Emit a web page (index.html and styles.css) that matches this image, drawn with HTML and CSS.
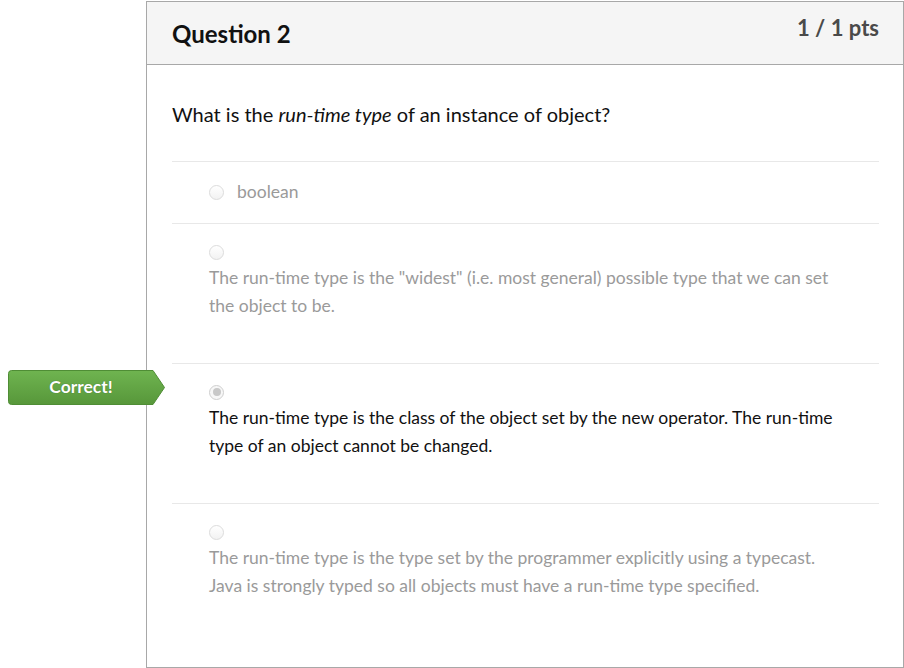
FILE: index.html
```html
<!DOCTYPE html>
<html>
<head>
<meta charset="utf-8">
<link rel="stylesheet" href="styles.css">
</head>
<body>
<div class="page">
  <div class="card">
    <div class="header">
      <h2 class="title">Question 2</h2>
      <div class="pts">1 / 1 pts</div>
    </div>
    <div class="body">
      <p class="question">What is the <em>run-time type</em> of an instance of object?</p>
      <div class="answers">
        <div class="answer short">
          <span class="radio"></span>
          <span class="label">boolean</span>
        </div>
        <div class="answer long">
          <div class="radio-line"><span class="radio"></span></div>
          <div class="label">The run-time type is the "widest" (i.e. most general) possible type that we can set the object to be.</div>
        </div>
        <div class="answer long selected">
          <div class="badge">
            <svg class="badge-bg" width="158" height="35" viewBox="0 0 158 35">
              <defs>
                <linearGradient id="g" x1="0" y1="0" x2="0" y2="1">
                  <stop offset="0" stop-color="#6fb450"/>
                  <stop offset="1" stop-color="#57973a"/>
                </linearGradient>
              </defs>
              <path d="M3.5 0.5 H145 L156.5 17.5 L145 34.5 H3.5 Q0.5 34.5 0.5 31.5 V3.5 Q0.5 0.5 3.5 0.5 Z" fill="url(#g)" stroke="#4f8d35" stroke-width="1"/>
            </svg>
            <span class="badge-text">Correct!</span>
          </div>
          <div class="radio-line"><span class="radio checked"></span></div>
          <div class="label">The run-time type is the class of the object set by the new operator. The run-time type of an object cannot be changed.</div>
        </div>
        <div class="answer long last">
          <div class="radio-line"><span class="radio"></span></div>
          <div class="label">The run-time type is the type set by the programmer explicitly using a typecast. Java is strongly typed so all objects must have a run-time type specified.</div>
        </div>
      </div>
    </div>
  </div>
</div>
</body>
</html>
```

FILE: styles.css
```css
* { box-sizing: border-box; }
html, body {
  margin: 0;
  padding: 0;
  background: #ffffff;
}
body {
  font-family: Lato, "Open Sans", "Liberation Sans", sans-serif;
  color: #222222;
}
.page {
  padding: 1px 0 0 146px;
  width: 904px;
  height: 668px;
}
.card {
  width: 758px;
  height: 667px;
  border: 1px solid #a8a8a8;
  display: flex;
  flex-direction: column;
}
.header {
  height: 63px;
  background: #f5f5f5;
  border-bottom: 1px solid #a8a8a8;
  display: flex;
  justify-content: space-between;
  align-items: flex-start;
  padding: 0 24px 0 25px;
}
.title {
  margin: 18px 0 0 0;
  font-size: 24px;
  font-weight: 700;
  line-height: 28px;
  color: #111111;
}
.pts {
  margin-top: 12px;
  font-size: 22px;
  font-weight: 700;
  line-height: 28px;
  color: #4a4a4a;
}
.body {
  padding: 35px 24px 0 25px;
}
.question {
  margin: 0 0 33px 0;
  font-size: 20px;
  line-height: 28px;
  color: #111111;
}
.question em {
  font-style: italic;
}
.answer {
  position: relative;
  border-top: 1px solid #e8e8e8;
  padding: 18px 30px 0 37px;
  font-size: 17.5px;
  color: #9a9a9a;
}
.answer.short {
  display: flex;
  align-items: center;
  gap: 13px;
  height: 62px;
  padding-top: 0;
  padding-bottom: 1px;
}
.answer.short .label {
  line-height: 28px;
}
.answer.long {
  height: 140px;
}
.answer.last {
  height: auto;
}
.radio-line {
  height: 20px;
  margin-bottom: 2px;
  display: flex;
  align-items: center;
}
.radio {
  display: inline-block;
  width: 15px;
  height: 15px;
  border-radius: 50%;
  border: 1px solid #dcdcdc;
  background: linear-gradient(#ffffff, #f2f2f2);
  flex: none;
  position: relative;
}
.radio.checked {
  border-color: #cfcfcf;
  background: #f7f7f7;
}
.radio.checked::after {
  content: "";
  position: absolute;
  left: 2.5px;
  top: 2.5px;
  width: 8px;
  height: 8px;
  border-radius: 50%;
  background: #c8c8c8;
}
.label {
  line-height: 28px;
}
.answer.selected .label {
  color: #111111;
}
.badge {
  position: absolute;
  left: -164px;
  top: 6px;
  width: 158px;
  height: 35px;
  display: flex;
  align-items: center;
  justify-content: center;
  padding-right: 12px;
  padding-bottom: 3px;
}
.badge-bg {
  position: absolute;
  left: 0;
  top: 0;
}
.badge-text {
  position: relative;
  color: #ffffff;
  font-weight: 700;
  font-size: 17.5px;
  text-shadow: 0 0 1px rgba(0, 0, 0, 0.35);
}
```
